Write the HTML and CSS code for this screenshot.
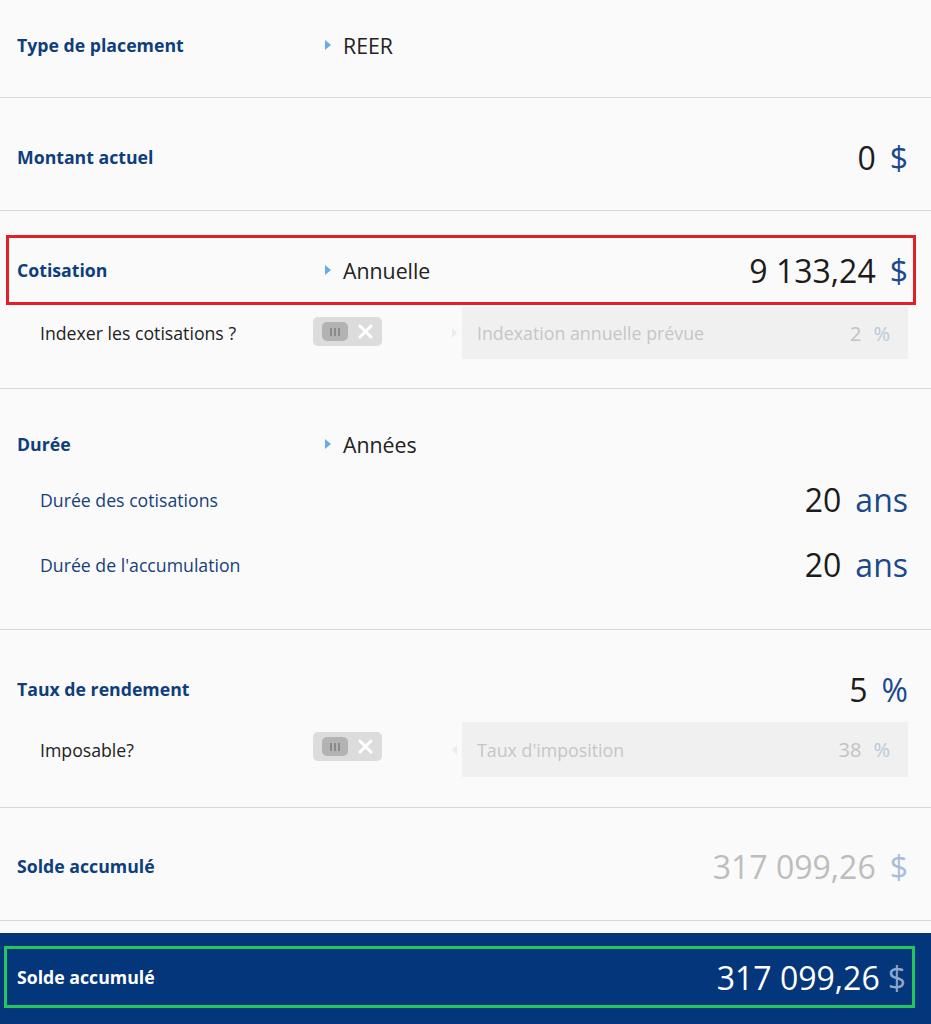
FILE: index.html
```html
<!DOCTYPE html>
<html lang="fr">
  <head>
    <meta charset="UTF-8" />
    <meta name="viewport" content="width=device-width, initial-scale=1.0" />
    <title>Calculateur REER</title>
    <link rel="stylesheet" href="styles.css">
  </head>
  <body>
    <div class="calc">

      <div class="section s-type">
        <div class="row main">
          <span class="label">Type de placement</span>
          <span class="choice"><span class="arrow"></span>REER</span>
        </div>
      </div>

      <div class="section s-montant">
        <div class="row main">
          <span class="label">Montant actuel</span>
          <span class="value">0<span class="unit">$</span></span>
        </div>
      </div>

      <div class="section s-cotisation">
        <div class="row main highlight">
          <span class="label">Cotisation</span>
          <span class="choice"><span class="arrow"></span>Annuelle</span>
          <span class="value">9 133,24<span class="unit">$</span></span>
        </div>
        <div class="row sub sub-box first">
          <span class="sublabel dark">Indexer les cotisations ?</span>
          <span class="toggle">
            <span class="knob"><i></i><i></i><i></i></span>
            <svg class="x" width="15" height="15" viewBox="0 0 15 15"><path d="M2 2 L13 13 M13 2 L2 13" stroke="#fff" stroke-width="3" stroke-linecap="round"/></svg>
          </span>
          <span class="faint-arrow right"></span>
          <div class="disabled">
            <span>Indexation annuelle prévue</span>
            <span class="dvalue">2<span class="dunit">%</span></span>
          </div>
        </div>
      </div>

      <div class="section s-duree">
        <div class="row main short">
          <span class="label">Durée</span>
          <span class="choice"><span class="arrow"></span>Années</span>
        </div>
        <div class="row sub line">
          <span class="sublabel">Durée des cotisations</span>
          <span class="value">20<span class="unit">ans</span></span>
        </div>
        <div class="row sub line">
          <span class="sublabel">Durée de l'accumulation</span>
          <span class="value">20<span class="unit">ans</span></span>
        </div>
      </div>

      <div class="section s-taux">
        <div class="row main">
          <span class="label">Taux de rendement</span>
          <span class="value">5<span class="unit">%</span></span>
        </div>
        <div class="row sub sub-box tall">
          <span class="sublabel dark">Imposable?</span>
          <span class="toggle">
            <span class="knob"><i></i><i></i><i></i></span>
            <svg class="x" width="15" height="15" viewBox="0 0 15 15"><path d="M2 2 L13 13 M13 2 L2 13" stroke="#fff" stroke-width="3" stroke-linecap="round"/></svg>
          </span>
          <span class="faint-arrow left"></span>
          <div class="disabled">
            <span>Taux d'imposition</span>
            <span class="dvalue">38<span class="dunit">%</span></span>
          </div>
        </div>
      </div>

      <div class="section s-solde">
        <div class="row main">
          <span class="label">Solde accumulé</span>
          <span class="value muted">317 099,26<span class="unit">$</span></span>
        </div>
      </div>

      <div class="total">
        <div class="total-inner">
          <span class="label">Solde accumulé</span>
          <span class="value">317 099,26<span class="unit">$</span></span>
        </div>
      </div>

    </div>
  </body>
</html>
```

FILE: styles.css
```css
body {
  font-family: "Open Sans", "Liberation Sans", Arial, sans-serif;
  background-color: #fafafa;
  margin: 0;
  padding: 0;
  color: #222;
}
.calc {
  width: 931px;
}
.section {
  border-bottom: 1px solid #d9d9d9;
  padding: 0 23px 0 17px;
}
.s-type {
  padding-top: 20px;
  padding-bottom: 27px;
}
.s-montant {
  padding-top: 34px;
  padding-bottom: 28px;
}
.s-cotisation {
  padding-top: 24px;
  padding-bottom: 29px;
}
.s-duree {
  padding-top: 32px;
  padding-bottom: 32px;
}
.s-taux {
  padding-top: 34px;
  padding-bottom: 30px;
}
.s-solde {
  padding-top: 33px;
  padding-bottom: 29px;
}
.row {
  display: flex;
  align-items: center;
}
.main {
  height: 50px;
}
.main.short {
  height: 46px;
}
.highlight {
  height: 64px;
  margin: 0 -8px 0 -11px;
  padding: 0 5px 0 8px;
  border: 3px solid #e3202a;
}
.line {
  height: 65px;
}
.sub-box {
  height: 52px;
}
.sub-box.first {
  margin-top: 2px;
}
.sub-box.tall {
  height: 55px;
  margin-top: 8px;
}
.label {
  width: 308px;
  font-weight: 700;
  font-size: 17.7px;
  color: #0f3e7c;
}
.choice {
  display: flex;
  align-items: center;
  font-size: 21.3px;
  color: #222;
}
.arrow {
  width: 0;
  height: 0;
  border-top: 5px solid transparent;
  border-bottom: 5px solid transparent;
  border-left: 6px solid #6aaae6;
  margin-right: 12px;
}
.value {
  margin-left: auto;
  font-size: 32px;
  color: #1c1c1c;
  white-space: nowrap;
}
.value .unit {
  color: #1a4a8c;
  margin-left: 14px;
}
.value.muted {
  color: #bdbdbd;
}
.value.muted .unit {
  color: #a9bddb;
}
.sublabel {
  width: 273px;
  padding-left: 23px;
  font-size: 17.7px;
  color: #163f7a;
}
.sublabel.dark {
  color: #222;
}
.toggle {
  width: 69px;
  height: 29px;
  box-sizing: border-box;
  display: flex;
  align-items: center;
  padding: 0 9px 0 9px;
  background-color: #dcdcdc;
  border-radius: 5px;
  align-self: flex-start;
  margin-top: 10px;
}
.knob {
  width: 26px;
  height: 19px;
  background-color: #b3b3b3;
  border-radius: 5px;
  display: flex;
  justify-content: center;
  align-items: center;
  gap: 2px;
}
.knob i {
  width: 2px;
  height: 8px;
  background-color: #8a8a8a;
}
.x {
  margin-left: auto;
}
.faint-arrow {
  width: 0;
  height: 0;
  border-top: 5px solid transparent;
  border-bottom: 5px solid transparent;
  margin-left: 70px;
  margin-right: 5px;
}
.faint-arrow.right {
  border-left: 5px solid #ececec;
}
.faint-arrow.left {
  border-right: 5px solid #ececec;
}
.disabled {
  flex: 1;
  align-self: stretch;
  display: flex;
  align-items: center;
  padding: 0 18px 0 15px;
  background-color: #f0f0f0;
  font-size: 17.8px;
  color: #c6c6c6;
}
.dvalue {
  margin-left: auto;
  font-size: 20px;
  color: #c2c2c2;
}
.dunit {
  color: #b8c9df;
  margin-left: 12px;
}
.total {
  margin-top: 12px;
  background-color: #03367a;
  padding: 13px 16px 16px 4px;
  height: 91px;
  box-sizing: border-box;
}
.total-inner {
  height: 62px;
  box-sizing: border-box;
  border: 3px solid #22c55e;
  display: flex;
  align-items: center;
  padding: 0 6px 0 10px;
}
.total .label {
  color: #fff;
}
.total .value {
  color: #fff;
}
.total .value .unit {
  color: #8ea6cc;
  margin-left: 8px;
}
```
